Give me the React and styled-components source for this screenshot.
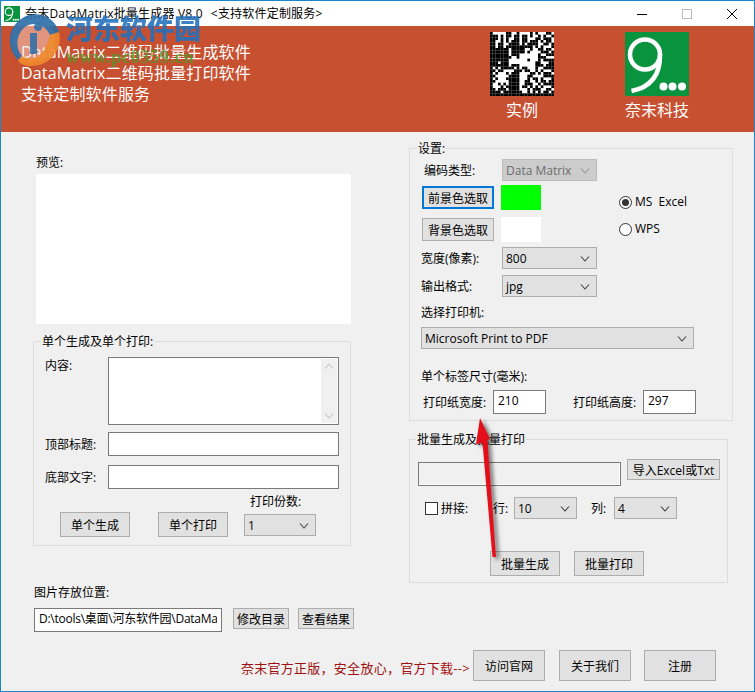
import React from 'react'
import styled, { createGlobalStyle } from 'styled-components'

const Global = createGlobalStyle`
  html, body { margin: 0; padding: 0; background: #f0f0f0; overflow: hidden; }
  * { box-sizing: border-box; }
`
const Window = styled.div`
  position: relative;
  width: 755px;
  height: 692px;
  overflow: hidden;
  background: #f0f0f0;
  border: 1px solid #1a86d0;
  color: #000;
  font-family: "Open Sans", "Noto Sans CJK SC", sans-serif;
  font-size: 12px;
  line-height: 16px;
`
const TitleBar = styled.div`
  display: flex;
  align-items: center;
  height: 25px;
  padding-left: 3px;
  background: #fff;
`
const TitleText = styled.span`
  margin-left: 5px;
  letter-spacing: 0.2px;
  white-space: pre;
`
const SubTitle = styled.span`
  margin-left: 8px;
  letter-spacing: 0.2px;
  white-space: pre;
`
const WinControls = styled.div`
  display: flex;
  margin-left: auto;
`
const WinButton = styled.div`
  display: flex;
  align-items: center;
  justify-content: center;
  width: 45px;
  height: 25px;
`
const Banner = styled.div`
  display: flex;
  height: 106px;
  padding: 6px 65px 0 20px;
  background: #c75031;
  color: #fff;
  font-size: 16px;
`
const BannerLines = styled.div`
  margin-top: 10px;
  line-height: 20.8px;
  letter-spacing: 0.15px;
`
const BannerLinks = styled.div`
  display: flex;
  gap: 71px;
  margin-left: auto;
`
const BannerLink = styled.div`
  display: flex;
  flex-direction: column;
  align-items: center;
  width: 64px;
  gap: 4px;
  line-height: 20px;
  white-space: nowrap;
`
const Columns = styled.div`
  display: flex;
  padding: 8px 0 0 32px;
`
const LeftCol = styled.div`
  width: 322px;
  padding-top: 14px;
`
const RightCol = styled.div`
  margin-left: 54px;
`
const Preview = styled.div`
  width: 315px;
  height: 150px;
  margin: 4px 0 9px 3px;
  background: #fff;
`
const Group = styled.fieldset`
  width: ${p => p.$w}px;
  height: ${p => p.$h}px;
  min-width: 0;
  margin: ${p => p.$mt || 0}px 0 0;
  padding: ${p => p.$pad};
  border: 1px solid #dcdcdc;
`
const Legend = styled.legend`
  height: 16px;
  margin-left: ${p => p.$ml}px;
  padding: 0 1px;
  line-height: 18px;
`
const Row = styled.div`
  display: flex;
  align-items: ${p => p.$align || 'center'};
  margin-top: ${p => p.$mt || 0}px;
  margin-left: ${p => p.$ml || 0}px;
`
const Label = styled.div`
  flex: none;
  width: ${p => (p.$w ? `${p.$w}px` : 'auto')};
  height: 16px;
  margin-left: ${p => p.$ml || 0}px;
  margin-top: ${p => p.$mt || 0}px;
  line-height: 18px;
  white-space: pre;
`
const Field = styled.input`
  display: block;
  flex: none;
  width: ${p => p.$w}px;
  height: ${p => p.$h || 24}px;
  margin: ${p => p.$mt || 0}px 0 0 ${p => p.$ml || 0}px;
  padding: 0 4px 4px;
  border: 1px solid #7a7a7a;
  border-radius: 0;
  outline: none;
  background: ${p => (p.$muted ? '#f0f0f0' : '#fff')};
  box-shadow: ${p => (p.$muted ? 'inset -1px -1px 0 #fff' : 'none')};
  color: #000;
  font: inherit;
  letter-spacing: ${p => p.$tight ? '-0.25px' : 'normal'};
`
const TextBox = styled.div`
  display: flex;
  justify-content: flex-end;
  width: 231px;
  height: 68px;
  padding: 1px;
  border: 1px solid #7a7a7a;
  background: #fff;
`
const ScrollBar = styled.div`
  display: flex;
  flex-direction: column;
  justify-content: space-between;
  align-items: center;
  width: 16px;
  padding: 4px 0;
  background: #f0f0f0;
`
const Button = styled.div`
  display: flex;
  flex: none;
  align-items: center;
  justify-content: center;
  width: ${p => p.$w || 70}px;
  height: ${p => p.$h || 25}px;
  margin-left: ${p => p.$ml || 0}px;
  margin-top: ${p => p.$mt || 0}px;
  padding-top: 2px;
  border: ${p => (p.$focus ? '2px solid #0078d7' : '1px solid #adadad')};
  background: #e1e1e1;
  white-space: nowrap;
`
const Combo = styled.div`
  display: flex;
  flex: none;
  align-items: center;
  justify-content: space-between;
  width: ${p => p.$w}px;
  height: 22px;
  margin-left: ${p => p.$ml || 0}px;
  margin-top: ${p => p.$mt || 0}px;
  padding: 1px 6px 0 3px;
  border: 1px solid ${p => (p.$disabled ? '#bcbcbc' : '#adadad')};
  background: ${p => (p.$disabled ? '#cccccc' : '#e1e1e1')};
  color: ${p => (p.$disabled ? '#6d6d6d' : '#000')};
`
const Swatch = styled.div`
  width: 40px;
  height: 25px;
  margin-left: 7px;
  background: ${p => p.$color};
`
const TopArea = styled.div`
  display: flex;
`
const Radios = styled.div`
  margin: 35px 0 0 22px;
`
const RadioRow = styled.div`
  display: flex;
  align-items: center;
  gap: 3px;
  height: 16px;
  margin-bottom: 11px;
  white-space: pre;
`
const RadioDot = styled.span`
  display: flex;
  align-items: center;
  justify-content: center;
  width: 13px;
  height: 13px;
  border: 1px solid #333;
  border-radius: 50%;
  background: #fff;
  &::after {
    content: '';
    display: ${p => (p.$on ? 'block' : 'none')};
    width: 7px;
    height: 7px;
    border-radius: 50%;
    background: #333;
  }
`
const CheckBox = styled.span`
  flex: none;
  width: 13px;
  height: 13px;
  border: 1px solid #333;
  background: #fff;
`
const Footer = styled.div`
  display: flex;
  align-items: center;
  justify-content: flex-end;
  margin-top: 18px;
  padding-right: 38px;
`
const FooterNote = styled.span`
  margin: 4px 3px 0 0;
  color: #a01010;
  font-size: 13px;
  letter-spacing: 0.28px;
  white-space: nowrap;
`
const Watermark = styled.div`
  position: absolute;
  top: 11px;
  left: 6px;
  display: flex;
  gap: 5px;
  pointer-events: none;
`
const WatermarkText = styled.div`
  display: flex;
  flex-direction: column;
`
const WatermarkTitle = styled.div`
  color: #2270bd;
  opacity: 0.88;
  font-size: 27px;
  font-weight: 900;
  line-height: 34px;
  white-space: nowrap;
`
const WatermarkUrl = styled.div`
  margin-top: 2px;
  color: #4f9a2a;
  opacity: 0.8;
  font-family: "Liberation Serif", serif;
  font-size: 18px;
  font-weight: 700;
  line-height: 18px;
  letter-spacing: 0.7px;
`
const Arrow = styled.svg`
  position: absolute;
  top: 409px;
  left: 464px;
  filter: drop-shadow(3px 2px 2px rgba(0, 0, 0, 0.55));
`

const CODE = [
  '#.....##..#....#.#...##.',
  '###.#.##.##.##.#..#.#..#',
  '###.#.#..##.##...##.###.',
  '##..#.#.###.##.###.#.##.',
  '##.##..####.#.####..##.#',
  '##.##.##########.#.#...#',
  '#######.#####..#..##.##.',
  '#######.#####.#....###.#',
  '#######.###.......#..###',
  '########..#.......###...',
  '#######.......#...#.####',
  '###.###..........##...##',
  '#######.###......###.###',
  '#.#.#####.#.##...#..####',
  '##.##....###.##..#.#...#',
  '#.#...#.###....##.#.###.',
  '##.....####...##....####',
  '#.#...#####...#.##.#...#',
  '##.....####..##..#.##.##',
  '#..#.#.####..###..#.####',
  '#...#.#####.##.#.#.#...#',
  '##.###.####...#.###..##.',
  '####.#######..#.#.#.##.#',
  '########################',
]

const CodeImage = () => (
  <svg width="64" height="64" viewBox="0 0 24 24">
    <rect width="24" height="24" fill="#fff" />
    {CODE.map((line, y) =>
      line.split('').map((c, x) =>
        c === '#' ? <rect key={`${x}-${y}`} x={x} y={y} width="1.02" height="1.02" fill="#000" /> : null
      )
    )}
  </svg>
)

const NineLogo = ({ size }) => (
  <svg width={size} height={size} viewBox="0 0 64 64">
    <rect width="64" height="64" fill="#0a933f" />
    <circle cx="20" cy="22.5" r="15" fill="none" stroke="#fff" strokeWidth="4.5" />
    <path d="M35 22 C35.5 42 27 55 6.5 59" fill="none" stroke="#fff" strokeWidth="4.5" />
    <circle cx="38.5" cy="54.5" r="4" fill="#fff" />
    <circle cx="47.5" cy="54.5" r="4" fill="#fff" />
    <circle cx="57" cy="54.5" r="4" fill="#fff" />
  </svg>
)

const Chevron = ({ up, color = '#444' }) => (
  <svg width="10" height="6" viewBox="0 0 10 6">
    <path d={up ? 'M1 5.5 L5 1 L9 5.5' : 'M1 .5 L5 5 L9 .5'} fill="none" stroke={color} strokeWidth="1.1" />
  </svg>
)

const Select = ({ value, disabled, ...rest }) => (
  <Combo $disabled={disabled} {...rest}>
    <span>{value}</span>
    <Chevron color={disabled ? '#999' : '#444'} />
  </Combo>
)

const App = () => {
  return (
    <Window>
      <Global />
      <TitleBar>
        <NineLogo size={16} />
        <TitleText>奈末DataMatrix批量生成器 V8.0</TitleText>
        <SubTitle>{'<支持软件定制服务>'}</SubTitle>
        <WinControls>
          <WinButton>
            <svg width="10" height="10" viewBox="0 0 10 10"><path d="M0 5.5 H10" stroke="#000" /></svg>
          </WinButton>
          <WinButton>
            <svg width="10" height="10" viewBox="0 0 10 10"><rect x=".5" y=".5" width="9" height="9" fill="none" stroke="#bdbdbd" /></svg>
          </WinButton>
          <WinButton>
            <svg width="10" height="10" viewBox="0 0 10 10"><path d="M0 0 L10 10 M10 0 L0 10" stroke="#000" /></svg>
          </WinButton>
        </WinControls>
      </TitleBar>

      <Banner>
        <BannerLines>
          <div>DataMatrix二维码批量生成软件</div>
          <div>DataMatrix二维码批量打印软件</div>
          <div>支持定制软件服务</div>
        </BannerLines>
        <BannerLinks>
          <BannerLink>
            <CodeImage />
            <span>实例</span>
          </BannerLink>
          <BannerLink>
            <NineLogo size={64} />
            <span>奈末科技</span>
          </BannerLink>
        </BannerLinks>
      </Banner>

      <Columns>
        <LeftCol>
          <Label $ml={3}>预览:</Label>
          <Preview />
          <Group $w={318} $h={213} $pad="8px 0 0 11px">
            <Legend $ml={-4}>单个生成及单个打印:</Legend>
            <Row $align="flex-start">
              <Label $w={63}>内容:</Label>
              <TextBox>
                <ScrollBar>
                  <Chevron up color="#c4c4c4" />
                  <Chevron color="#c4c4c4" />
                </ScrollBar>
              </TextBox>
            </Row>
            <Row $mt={7}>
              <Label $w={63}>顶部标题:</Label>
              <Field $w={231} readOnly />
            </Row>
            <Row $mt={9}>
              <Label $w={63}>底部文字:</Label>
              <Field $w={231} readOnly />
            </Row>
            <Row $mt={4} $ml={15} $align="flex-start">
              <Button $mt={19}>单个生成</Button>
              <Button $mt={19} $ml={28}>单个打印</Button>
              <div style={{ marginLeft: 16 }}>
                <Label $ml={6}>打印份数:</Label>
                <Select $w={72} $mt={5} value="1" />
              </div>
            </Row>
          </Group>
          <Label $mt={38} $ml={1}>图片存放位置:</Label>
          <Row $mt={8} $ml={1} $align="flex-start">
            <Field $w={188} $tight value="D:\tools\桌面\河东软件园\DataMatrix" readOnly />
            <Button $w={56} $h={21} $ml={11}>修改目录</Button>
            <Button $w={56} $h={21} $ml={9}>查看结果</Button>
          </Row>
        </LeftCol>

        <RightCol>
          <Group $w={324} $h={281} $pad="3px 0 0 11px">
            <Legend $ml={-4}>设置:</Legend>
            <TopArea>
              <div>
                <Row>
                  <Label $w={78} $ml={3}>编码类型:</Label>
                  <Select $w={95} disabled value="Data Matrix" />
                </Row>
                <Row $mt={4}>
                  <Button $w={72} $h={23} $ml={1} $focus>前景色选取</Button>
                  <Swatch $color="#00ff00" />
                </Row>
                <Row $mt={7}>
                  <Button $w={72} $h={23} $ml={1}>背景色选取</Button>
                  <Swatch $color="#ffffff" />
                </Row>
                <Row $mt={5}>
                  <Label $w={81}>宽度(像素):</Label>
                  <Select $w={95} value="800" />
                </Row>
                <Row $mt={6}>
                  <Label $w={81}>输出格式:</Label>
                  <Select $w={95} value="jpg" />
                </Row>
              </div>
              <Radios>
                <RadioRow><RadioDot $on />MS  Excel</RadioRow>
                <RadioRow><RadioDot />WPS</RadioRow>
              </Radios>
            </TopArea>
            <Label $mt={7}>选择打印机:</Label>
            <Select $w={273} $mt={7} value="Microsoft Print to PDF" />
            <Label $mt={19}>单个标签尺寸(毫米):</Label>
            <Row $mt={6}>
              <Label $w={70} $ml={2}>打印纸宽度:</Label>
              <Field $w={53} readOnly value="210" />
              <Label $w={70} $ml={27}>打印纸高度:</Label>
              <Field $w={53} readOnly value="297" />
            </Row>
          </Group>

          <Group $w={319} $h={152} $mt={10} $pad="12px 0 0 8px">
            <Legend $ml={-2}>批量生成及批量打印</Legend>
            <Row $align="flex-start">
              <Field $w={203} $mt={3} $muted readOnly />
              <Button $w={93} $h={21} $ml={6}>导入Excel或Txt</Button>
            </Row>
            <Row $mt={11} $ml={7}>
              <CheckBox />
              <Label $w={52} $ml={3}>拼接:</Label>
              <Label $w={21}>行:</Label>
              <Select $w={63} value="10" />
              <Label $w={23} $ml={14}>列:</Label>
              <Select $w={63} value="4" />
            </Row>
            <Row $mt={32} $ml={72}>
              <Button>批量生成</Button>
              <Button $ml={14}>批量打印</Button>
            </Row>
          </Group>
        </RightCol>
      </Columns>

      <Footer>
        <FooterNote>奈末官方正版，安全放心，官方下载--&gt;</FooterNote>
        <Button $w={72} $h={31}>访问官网</Button>
        <Button $w={72} $h={31} $ml={14}>关于我们</Button>
        <Button $w={72} $h={31} $ml={13}>注册</Button>
      </Footer>

      <Watermark>
        <svg width="54" height="56" viewBox="0 0 54 56">
          <circle cx="26" cy="28" r="22" fill="#ffe6dc" opacity="0.45" />
          <path d="M11 48 C-3 34 1 10 22 3 C36 0 48 7 52 20 L43 23 C38 12 26 9 18 15 C9 22 8 36 15 44 Z" fill="#2a6ea8" opacity="0.9" />
          <path d="M52 20 C56 36 44 54 24 54 C18 54 13 52 11 48 L15 44 C24 50 38 46 43 23 Z" fill="#ee8a2c" opacity="0.9" />
          <rect x="23" y="21" width="7" height="21" fill="#2a6ea8" opacity="0.85" />
          <circle cx="31" cy="15" r="4" fill="#2a6ea8" opacity="0.85" />
        </svg>
        <WatermarkText>
          <WatermarkTitle>河东软件园</WatermarkTitle>
          <WatermarkUrl>www.pc0359.cn</WatermarkUrl>
        </WatermarkText>
      </Watermark>

      <Arrow width="40" height="155" viewBox="0 0 40 155">
        <polygon points="15,8 25,29 22.5,30 31,147 27.5,147 17.5,33 11,34" fill="#e3101c" />
      </Arrow>
    </Window>
  )
}

export default App
